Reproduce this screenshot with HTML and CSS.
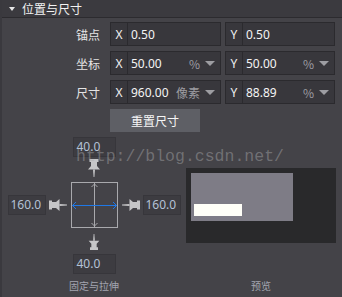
FILE: index.html
```html
<!DOCTYPE html>
<html lang="zh">
  <head>
    <meta charset="UTF-8" />
    <title>位置与尺寸</title>
    <link rel="stylesheet" href="styles.css">
  </head>
  <body>
    <div class="panel">
      <div class="header">
        <span class="fold"></span>
        <span class="title">位置与尺寸</span>
      </div>

      <div class="body">
        <div class="row">
          <span class="label">锚点</span>
          <div class="field fx"><span class="axis">X</span><span class="val">0.50</span></div>
          <div class="field fy"><span class="axis">Y</span><span class="val">0.50</span></div>
        </div>
        <div class="row">
          <span class="label">坐标</span>
          <div class="field fx"><span class="axis">X</span><span class="val">50.00</span><span class="unit">%</span><span class="caret"></span></div>
          <div class="field fy"><span class="axis">Y</span><span class="val">50.00</span><span class="unit">%</span><span class="caret"></span></div>
        </div>
        <div class="row">
          <span class="label">尺寸</span>
          <div class="field fx"><span class="axis">X</span><span class="val">960.00</span><span class="unit">像素</span><span class="caret"></span></div>
          <div class="field fy"><span class="axis">Y</span><span class="val">88.89</span><span class="unit">%</span><span class="caret"></span></div>
        </div>
        <div class="row-btn">
          <button class="btn-reset">重置尺寸</button>
        </div>

        <div class="bottom">
          <div class="anchor">
            <div class="num">40.0</div>
            <!-- 图钉：针尖朝向中间的框 -->
            <svg class="pin pin-top" width="12" height="18" viewBox="0 0 12 18">
              <path d="M1.5 0H10.5V3H9V7L12 10.5H0L3 7V3H1.5Z" fill="#c6c6c8"/>
              <path d="M5 10.5H7L6.4 18H5.6Z" fill="#c6c6c8"/>
            </svg>
            <div class="mid">
              <div class="num side">160.0</div>
              <svg class="pin" width="18" height="12" viewBox="0 0 18 12">
                <path d="M0 1.5V10.5H3V9H7L10.5 12V0L7 3H3V1.5Z" fill="#c6c6c8"/>
                <path d="M10.5 5V7L18 6.4V5.6Z" fill="#c6c6c8"/>
              </svg>
              <svg class="box" width="47" height="46" viewBox="0 0 47 46">
                <rect x="0.5" y="0.5" width="46" height="45" fill="none" stroke="#a9a9ad"/>
                <line x1="23.5" y1="1" x2="23.5" y2="45" stroke="#a9a9ad"/>
                <path d="M20.5 5L23.5 2L26.5 5M20.5 41L23.5 44L26.5 41" fill="none" stroke="#a9a9ad"/>
                <line x1="1.5" y1="23.5" x2="45.5" y2="23.5" stroke="#1f78e6"/>
                <path d="M5 20L1.5 23.5L5 27M42 20L45.5 23.5L42 27" fill="none" stroke="#1f78e6"/>
              </svg>
              <svg class="pin" width="18" height="12" viewBox="0 0 18 12">
                <path d="M18 1.5V10.5H15V9H11L7.5 12V0L11 3H15V1.5Z" fill="#c6c6c8"/>
                <path d="M7.5 5V7L0 6.4V5.6Z" fill="#c6c6c8"/>
              </svg>
              <div class="num side">160.0</div>
            </div>
            <svg class="pin pin-bottom" width="12" height="16" viewBox="0 0 12 18">
              <path d="M1.5 18H10.5V15H9V11L12 7.5H0L3 11V15H1.5Z" fill="#c6c6c8"/>
              <path d="M5 7.5H7L6.4 0H5.6Z" fill="#c6c6c8"/>
            </svg>
            <div class="num">40.0</div>
            <div class="caption">固定与拉伸</div>
          </div>

          <div class="preview">
            <div class="canvas">
              <div class="screen">
                <div class="bar"></div>
              </div>
            </div>
            <div class="caption">预览</div>
          </div>
        </div>
      </div>

      <div class="watermark">http://blog.csdn.net/</div>
    </div>
  </body>
</html>
```

FILE: styles.css
```css
body {
  margin: 0;
  background-color: #444348;
  font-family: "Noto Sans", "Noto Sans CJK SC", sans-serif;
  font-size: 12px;
  color: #ececec;
}
.panel {
  position: relative;
  width: 342px;
  height: 297px;
  border-left: 2px solid #3a393e;
  box-sizing: border-box;
  overflow: hidden;
}
.header {
  height: 17px;
  background-color: #3b3a3f;
  border-bottom: 1px solid #2c2b2f;
  display: flex;
  align-items: center;
}
.fold {
  width: 0;
  height: 0;
  border-left: 3px solid transparent;
  border-right: 3px solid transparent;
  border-top: 4px solid #e6e6e6;
  margin-left: 7px;
  margin-right: 7px;
}
.title {
  font-family: "Noto Sans CJK SC", sans-serif;
  font-size: 12px;
  color: #f2f2f2;
  line-height: 17px;
}
.body {
  padding-top: 4px;
}
.row {
  display: flex;
  align-items: center;
  height: 24px;
  margin-bottom: 5px;
}
.label {
  width: 98px;
  text-align: right;
  margin-right: 10px;
  font-family: "Noto Sans CJK SC", sans-serif;
  color: #e4e4e4;
}
.field {
  display: flex;
  align-items: center;
  height: 24px;
  box-sizing: border-box;
  border: 1px solid #2b2a2e;
  background-color: #38373c;
}
.fx {
  width: 111px;
  margin-right: 4px;
}
.fy {
  width: 110px;
}
.axis {
  width: 16px;
  height: 100%;
  display: flex;
  align-items: center;
  justify-content: center;
  border-right: 1px solid #2b2a2e;
  color: #f0f0f0;
}
.val {
  flex: 1;
  padding-left: 3px;
  color: #f4f4f4;
}
.unit {
  color: #9d9da2;
  margin-right: 5px;
  font-family: "Noto Sans CJK SC", sans-serif;
}
.caret {
  width: 0;
  height: 0;
  border-left: 5px solid transparent;
  border-right: 5px solid transparent;
  border-top: 5px solid #9d9da2;
  margin-right: 5px;
}
.row-btn {
  padding-left: 108px;
  height: 23px;
}
.btn-reset {
  width: 90px;
  height: 23px;
  border: none;
  background-color: #5e5f65;
  color: #f6f6f6;
  font-family: "Noto Sans CJK SC", sans-serif;
  font-size: 12px;
  padding: 0;
}
.bottom {
  display: flex;
  margin-top: 5px;
}
.anchor {
  width: 184px;
  display: flex;
  flex-direction: column;
  align-items: center;
}
.num {
  width: 43px;
  height: 20px;
  box-sizing: border-box;
  border: 1px solid #37363b;
  background-color: #3d3c41;
  color: #b4c2d6;
  font-size: 12px;
  line-height: 18px;
  padding-left: 3px;
}
.num.side {
  width: 38px;
  padding-left: 2px;
}
.pin {
  display: block;
}
.pin-top {
  margin-top: 2px;
  margin-bottom: 5px;
}
.pin-bottom {
  margin-top: 6px;
  margin-bottom: 4px;
}
.mid {
  display: flex;
  align-items: center;
  gap: 3px;
}
.box {
  display: block;
  margin: 0 1px;
}
.caption {
  margin-top: 6px;
  font-family: "Noto Sans CJK SC", sans-serif;
  font-size: 10px;
  line-height: 12px;
  color: #a3a5b0;
}
.preview {
  width: 150px;
  display: flex;
  flex-direction: column;
  align-items: center;
  padding-top: 31px;
}
.canvas {
  width: 150px;
  height: 75px;
  background-color: #29292b;
  padding: 5px;
  box-sizing: border-box;
}
.screen {
  width: 102px;
  height: 48px;
  background-color: #7e7c86;
  padding: 31px 0 0 3px;
  box-sizing: border-box;
}
.bar {
  width: 48px;
  height: 12px;
  background-color: #fffff8;
}
.preview .caption {
  margin-top: auto;
}
.watermark {
  position: absolute;
  left: 74px;
  top: 147px;
  font-family: "Liberation Mono", monospace;
  font-size: 16.5px;
  color: rgba(170, 170, 172, 0.45);
  pointer-events: none;
  white-space: nowrap;
}
```
